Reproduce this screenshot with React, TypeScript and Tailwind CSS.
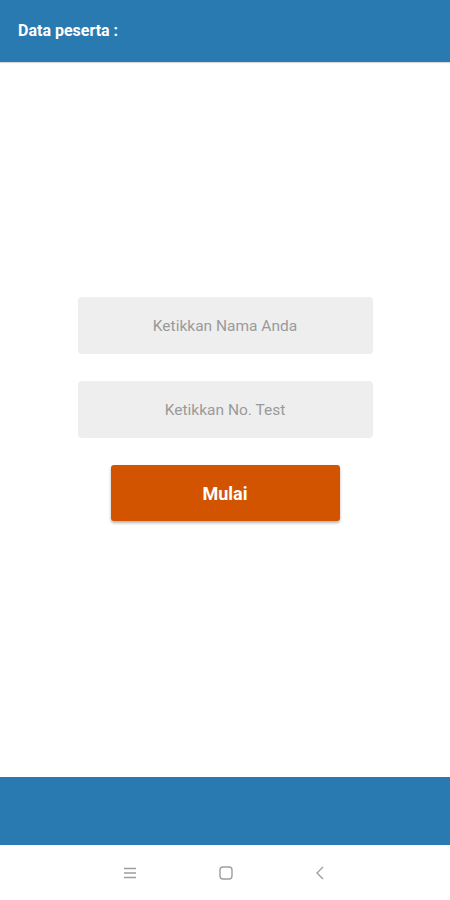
export default function App() {
  return (
    <div className="flex h-[900px] w-[450px] flex-col bg-white font-['Roboto',sans-serif]">
      <div className="flex h-[62px] items-center bg-[#2a7ab2] px-[18px] shadow-[0_1px_1px_rgba(0,0,0,0.15)]">
        <h1 className="text-[16px] font-bold text-white">Data peserta :</h1>
      </div>

      <div className="flex flex-1 flex-col items-center pt-[235px]">
        <input
          className="h-[57px] w-[295px] rounded-[4px] bg-[#eeeeee] text-center text-[15.5px] text-[#333] outline-none placeholder:text-[#9a9a9a]"
          placeholder="Ketikkan Nama Anda"
        />
        <input
          className="mt-[27px] h-[57px] w-[295px] rounded-[4px] bg-[#eeeeee] text-center text-[15.5px] text-[#333] outline-none placeholder:text-[#9a9a9a]"
          placeholder="Ketikkan No. Test"
        />
        <button className="mt-[27px] h-[56px] w-[229px] rounded-[3px] bg-[#d35400] text-[18px] font-bold text-white shadow-[0_2px_3px_rgba(0,0,0,0.3)]">
          Mulai
        </button>
      </div>

      <div className="h-[68px] bg-[#2a7ab2]" />

      {/* system nav */}
      <div className="flex h-[55px] items-center justify-center gap-[82px] bg-white text-[#9e9e9e]">
        <svg width="14" height="12" viewBox="0 0 14 12" className="ml-[-3px]">
          <path d="M1 1.5h12M1 6h12M1 10.5h12" stroke="currentColor" strokeWidth="1.4" />
        </svg>
        <svg width="14" height="14" viewBox="0 0 14 14">
          <rect x="1" y="1" width="12" height="12" rx="3" fill="none" stroke="currentColor" strokeWidth="1.4" />
        </svg>
        <svg width="10" height="14" viewBox="0 0 10 14">
          <path d="M8 1L2 7l6 6" fill="none" stroke="currentColor" strokeWidth="1.4" />
        </svg>
      </div>
    </div>
  )
}
